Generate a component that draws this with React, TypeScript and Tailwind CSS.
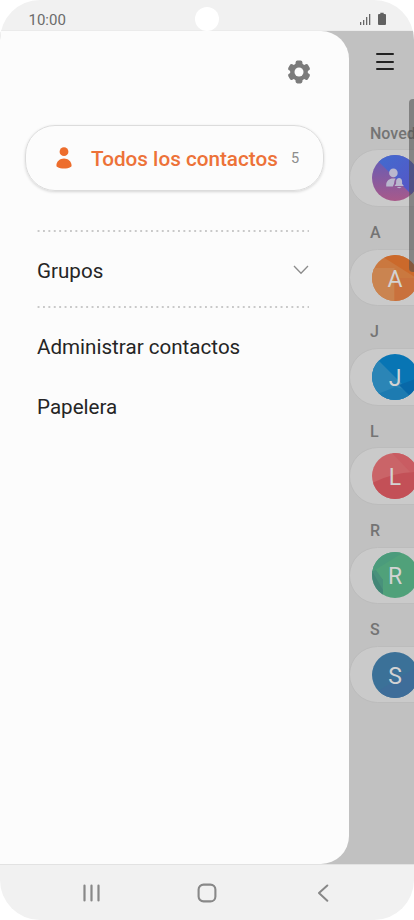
import React from "react";

function GearIcon() {
  return (
    <svg className="h-[24px] w-[24px]" viewBox="0 0 24 24" fill="#7b7b7b">
      <circle cx="12" cy="12" r="8.9" />
      <rect x="8.6" y="0.6" width="6.8" height="22.8" rx="1.8" />
      <rect x="8.6" y="0.6" width="6.8" height="22.8" rx="1.8" transform="rotate(60 12 12)" />
      <rect x="8.6" y="0.6" width="6.8" height="22.8" rx="1.8" transform="rotate(120 12 12)" />
      <circle cx="12" cy="12" r="4.5" fill="#fcfcfc" />
    </svg>
  );
}

function PersonIcon() {
  return (
    <svg className="h-[22px] w-4" viewBox="0 0 16 22" fill="#ed6d2c">
      <circle cx="8" cy="4.7" r="4.4" />
      <path d="M.4 18.2C.7 14.4 4 11.6 8 11.6s7.3 2.8 7.6 6.600q.1 1.300-1 1.900C12.800 21.200 10.500 21.600 8 21.600s-4.800-.4-6.600-1.500q-1.100-.6-1-1.900z" />
    </svg>
  );
}

function DottedLine() {
  return (
    <svg className="block h-[2px] w-[273px]" viewBox="0 0 273 2">
      <line x1="0.6" y1="1" x2="272" y2="1" stroke="#c9c9c9" strokeWidth="1.8" strokeDasharray="1.9 3.5" />
    </svg>
  );
}

function NewsAvatar() {
  return (
    <svg className="h-[46px] w-[46px] shrink-0 rounded-full" viewBox="0 0 46 46">
      <defs>
        <linearGradient id="news" x1="0" y1="0" x2="0" y2="1">
          <stop offset="0.1" stopColor="#685cb4" />
          <stop offset="1" stopColor="#a8598a" />
        </linearGradient>
        <linearGradient id="newsBlue" x1="0" y1="0" x2="1" y2="1">
          <stop offset="0.2" stopColor="#4568cd" />
          <stop offset="0.9" stopColor="#5753c6" />
        </linearGradient>
      </defs>
      <path d="M0 0h46v46H0z" fill="url(#news)" />
      <path d="M0 0h46v46L8 8z" fill="url(#newsBlue)" />
      <g fill="#b9b7ce">
        <circle cx="21.400" cy="17.900" r="4.300" />
        <path d="M14.200 31.600v-1.800c0-3.600 3-6.200 6.800-6.200h2.600c-1.200 1.600-1.200 3.500-1.700 5.400l-1.100 2.600z" />
        <path d="M22.800 31v-.8l1.300-1.300v-2.200c0-2.200 1.300-3.600 3-3.600s3 1.400 3 3.600v2.200l1.400 1.300v.8zM25 32h4.400c-.6 1.500-3.800 1.500-4.400 0z" />
      </g>
    </svg>
  );
}

function SectionLabel({ children }: { children: React.ReactNode }) {
  return (
    <div className="flex h-[41.8px] items-center whitespace-nowrap pl-[21px] pt-[10.500px] text-[16px] font-medium leading-none text-[#747474]">
      {children}
    </div>
  );
}

function Row({ children }: { children: React.ReactNode }) {
  return (
    <div className="flex h-[57.5px] w-[120px] items-center rounded-l-full border border-[#bcbcbc] bg-[#cacaca] pl-[22px]">
      {children}
    </div>
  );
}

const contacts = [
  {
    letter: "A",
    base: "#ca783f",
    shapes: [
      { d: "M0 13h22.500v33H0z", fill: "#ca8450" },
      { d: "M22.500 23H46v23H22.500z", fill: "#c9713d" },
      { d: "M11 2L22 0H46V24z", fill: "#cb692b" },
    ],
  },
  {
    letter: "J",
    base: "#0875b4",
    shapes: [
      { d: "M0 0L7 7L46 46H0z", fill: "#2b85b6" },
      { d: "M0 42Q14 37 23 33L36 36L46 46H0z", fill: "#1d7bb1" },
      { d: "M27 31Q38 27 46 24V46H42z", fill: "#0868a8" },
    ],
  },
  {
    letter: "L",
    base: "#ca6468",
    shapes: [
      { d: "M20 0H46V19L38 19z", fill: "#c95c62" },
      { d: "M0 30Q22 19 46 19V46H0z", fill: "#c35057" },
    ],
  },
  {
    letter: "R",
    base: "#50a17a",
    shapes: [
      { d: "M0 0H32L3 18H0z", fill: "#4b9b7c" },
      { d: "M0 18L11 28V46H0z", fill: "#438677" },
      { d: "M0 19L4 18L11 28V38z", fill: "#49917b" },
    ],
  },
  {
    letter: "S",
    base: "#3b7198",
    shapes: [{ d: "M8 38L46 14V46H8z", fill: "#3e6d99" }],
  },
];

function ContactList() {
  return (
    <div className="relative w-[65px] shrink-0 overflow-hidden">
      <div className="flex h-[77.200px] flex-col gap-[5.5px] pl-[27px] pt-[22.500px]">
        <div className="h-[2px] w-[18px] rounded-full bg-[#222]" />
        <div className="h-[2px] w-[18px] rounded-full bg-[#222]" />
        <div className="h-[2px] w-[18px] rounded-full bg-[#222]" />
      </div>
      <SectionLabel>Noved</SectionLabel>
      <Row>
        <NewsAvatar />
      </Row>
      {contacts.map((c) => (
        <div key={c.letter}>
          <SectionLabel>{c.letter}</SectionLabel>
          <Row>
            <div className="grid h-[46px] w-[46px] shrink-0 place-items-center overflow-hidden rounded-full">
              <svg className="col-start-1 row-start-1 h-[46px] w-[46px]" viewBox="0 0 46 46">
                <path d="M0 0h46v46H0z" fill={c.base} />
                {c.shapes.map((s) => (
                  <path key={s.d} d={s.d} fill={s.fill} />
                ))}
              </svg>
              <span className="z-10 col-start-1 row-start-1 pt-[3px] text-[23px] leading-none text-[#d3d3d3]">{c.letter}</span>
            </div>
          </Row>
        </div>
      ))}
      <div className="absolute right-0 top-[68px] z-20 h-[173px] w-[5px] rounded-l-[4px] bg-[#4d4d4d]/55" />
    </div>
  );
}

function Drawer() {
  return (
    <div className="w-[349px] shrink-0 rounded-r-[28px] bg-[#fcfcfc]">
      <div className="flex h-[94px] justify-end pr-[38.500px] pt-[29px]">
        <GearIcon />
      </div>
      <div className="ml-[25px] flex h-[66px] w-[299px] items-center rounded-[30px] border border-[#dcdcdc] pl-[29.500px] shadow-[0_1px_3px_rgba(0,0,0,0.16)]">
        <PersonIcon />
        <span className="ml-[19.500px] mt-[4px] w-[200px] whitespace-nowrap text-[20.700px] font-medium text-[#ed7238]">Todos los contactos</span>
        <span className="mt-[3px] text-[14.5px] text-[#8d8d8d]">5</span>
      </div>
      <div className="ml-[37px] mt-[39.500px] w-[272px] text-[20.600px] leading-[24px] text-[#252525]">
        <DottedLine />
        <div className="flex h-[74px] items-center justify-between">
          <span className="mt-[3px]">Grupos</span>
          <svg className="mt-[1px] h-[10px] w-[16px]" viewBox="0 0 16 10" fill="none" stroke="#8c8c8c" strokeWidth="1.3">
            <path d="M1 1l7 7.3L15 1" />
          </svg>
        </div>
        <DottedLine />
        <div className="mt-[26.500px]">Administrar contactos</div>
        <div className="mt-[36px]">Papelera</div>
      </div>
    </div>
  );
}

export default function App() {
  return (
    <div className="h-[920px] w-[414px] bg-white font-[Roboto,sans-serif]">
      <div className="flex h-full flex-col overflow-hidden rounded-[40px] bg-[#f1f1f1]">
        <div className="grid h-[30.500px] shrink-0 grid-cols-[1fr_24px_1fr] items-start border-b border-[#ebebeb] pl-[28.500px] pr-[28.500px]">
          <span className="pt-[13px] text-[15px] leading-none text-[#6b6b6b]">10:00</span>
          <div className="mt-[7px] h-[24px] w-[24px] rounded-full bg-white" />
          <svg className="mt-[12px] h-[14px] w-[28px] justify-self-end" viewBox="0 0 28 14" fill="#666">
            <path d="M2 10h1.3v3H2zM5 8h1.3v5H5zM8 5h1.3v8H8zM11 2h1.3v11h-1.300z" />
            <path d="M20 3q0-1 1-1h1.300V.8h3.400V2H27q1 0 1 1v9q0 1-1 1h-6q-1 0-1-1z" fill="#616161" />
          </svg>
        </div>
        <div className="flex h-[833.5px] shrink-0 bg-[#c1c1c1]">
          <Drawer />
          <ContactList />
        </div>
        <div className="flex flex-1 items-center justify-between border-t border-[#e2e2e2] pl-[83px] pr-[85px]">
          <svg className="h-[18px] w-[17px]" viewBox="0 0 17 18" stroke="#888" strokeWidth="2.2" strokeLinecap="round">
            <path d="M1.5 1.5v15M8.5 1.5v15M15.5 1.5v15" />
          </svg>
          <svg className="-ml-[3px] h-[20px] w-[20px]" viewBox="0 0 20 20" fill="none" stroke="#888" strokeWidth="2.1">
            <rect x="1.6" y="1.6" width="16.8" height="16.8" rx="5" />
          </svg>
          <svg className="h-[18px] w-[12px]" viewBox="0 0 12 18" fill="none" stroke="#888" strokeWidth="2" strokeLinecap="round" strokeLinejoin="round">
            <path d="M10.3 1.5L2 9l8.3 7.7" />
          </svg>
        </div>
      </div>
    </div>
  );
}
